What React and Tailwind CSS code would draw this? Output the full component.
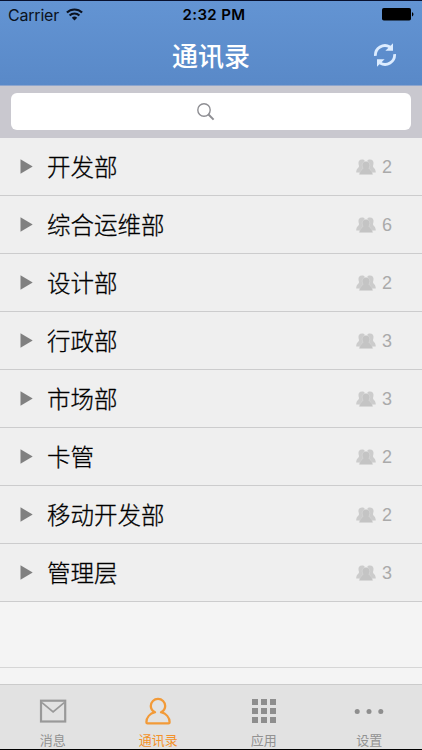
import React from 'react';

const departments = [
  ['开发部', 2],
  ['综合运维部', 6],
  ['设计部', 2],
  ['行政部', 3],
  ['市场部', 3],
  ['卡管', 2],
  ['移动开发部', 2],
  ['管理层', 3],
];

function WifiIcon() {
  return (
    <svg width="17" height="13" viewBox="0 0 17 13" fill="none" stroke="#0b1220" strokeWidth="2.1">
      <path d="M0.9 4.6 A10.8 10.8 0 0 1 16.1 4.6" />
      <path d="M3.6 7.5 A7 7 0 0 1 13.4 7.5" />
      <path d="M8.5 12.4 L5.8 9.7 A3.9 3.9 0 0 1 11.2 9.7 Z" fill="#0b1220" stroke="none" />
    </svg>
  );
}

function BatteryIcon() {
  return (
    <svg width="32" height="13" viewBox="0 0 32 13">
      <rect x="0" y="0" width="29" height="12.6" rx="1.8" fill="#000" />
      <path d="M30 4.3 C31.9 4.7 31.9 8 30 8.4 Z" fill="#000" />
    </svg>
  );
}

function RefreshIcon() {
  return (
    <svg width="24" height="24" viewBox="0 0 24 24" fill="none" stroke="#dcecff" strokeWidth="2.8">
      <path d="M2.4 12.8 A9.6 9.6 0 0 1 16.9 4" />
      <path d="M21.6 11.2 A9.6 9.6 0 0 1 7.1 20" />
      <path d="M20 0.2 V7.8 H12.4 Z" fill="#dcecff" stroke="none" />
      <path d="M4 23.8 V16.2 H11.6 Z" fill="#dcecff" stroke="none" />
    </svg>
  );
}

function SearchIcon() {
  return (
    <svg width="18" height="18" viewBox="0 0 18 18" fill="none" stroke="#8e8e93">
      <circle cx="7" cy="7" r="6.2" strokeWidth="1.4" />
      <path d="M11.5 11.5 L16.6 16.6" strokeWidth="2" />
    </svg>
  );
}

function GroupIcon() {
  return (
    <svg width="20" height="16" viewBox="0 0 20 16">
      <g fill="#cccccc">
        <path d="M6.2 0.5 C3.2 0.5 2.2 2.4 2.5 4.7 C2.7 6.1 3.3 7 2.8 8 C2.2 9.2 0.3 9.5 0.2 13.6 H6 L8.6 1.6 C8.1 0.8 7.4 0.5 6.2 0.5 Z" />
        <path d="M13.8 0.5 C16.8 0.5 17.8 2.4 17.5 4.7 C17.3 6.1 16.7 7 17.2 8 C17.8 9.2 19.7 9.5 19.8 13.6 H14 L11.4 1.6 C11.9 0.8 12.6 0.5 13.8 0.5 Z" />
      </g>
      <path
        d="M10 2.4 C7.3 2.4 6 4.1 6.2 6.4 C6.3 7.6 6.9 8.5 6.9 9.5 C6 11.1 3.6 11.4 3.4 15.6 H16.6 C16.4 11.4 14 11.1 13.1 9.5 C13.1 8.5 13.7 7.6 13.8 6.4 C14 4.1 12.7 2.4 10 2.4 Z"
        fill="#c4c4c4"
        stroke="#d8d8d8"
        strokeWidth="0.6"
      />
    </svg>
  );
}

function MailIcon() {
  return (
    <svg width="28" height="28" viewBox="0 0 28 28" fill="none" stroke="#999999">
      <rect x="2" y="3.7" width="24.2" height="20.8" strokeWidth="2.2" />
      <path d="M3 5.6 L14.1 15 L25.2 5.6" strokeWidth="1.7" />
    </svg>
  );
}

function PersonIcon() {
  return (
    <svg width="28" height="28" viewBox="0 0 28 28" fill="none" stroke="#f29a38" strokeWidth="2.3" strokeLinejoin="round">
      <path d="M11 15.2 C8.3 13.9 6.8 11.6 6.8 9 C6.8 5 10 1.9 14 1.9 C18 1.9 21.2 5 21.2 9 C21.2 11.6 19.7 13.9 17 15.2 C22 16.6 25.6 20.6 25.6 25.2 Q25.6 26.3 24.5 26.3 H3.5 Q2.4 26.3 2.4 25.2 C2.4 20.6 6 16.6 11 15.2 Z" />
    </svg>
  );
}

function GridIcon() {
  return (
    <svg width="28" height="28" viewBox="0 0 28 28" fill="#8e8e8e">
      {[2, 11, 20].map((y) => [2, 11, 20].map((x) => <rect key={`${x}-${y}`} x={x} y={y} width="6" height="6" />))}
    </svg>
  );
}

function MoreIcon() {
  return (
    <svg width="30" height="28" viewBox="0 0 30 28" fill="#8e8e8e">
      <circle cx="3.2" cy="14.5" r="2.5" />
      <circle cx="15" cy="14.5" r="2.5" />
      <circle cx="26.8" cy="14.5" r="2.5" />
    </svg>
  );
}

const tabs = [
  ['消息', MailIcon, false],
  ['通讯录', PersonIcon, true],
  ['应用', GridIcon, false],
  ['设置', MoreIcon, false],
];

export default function App() {
  return (
    <div className="flex h-[750px] w-[422px] flex-col overflow-hidden border-b border-black bg-[#f4f4f4] font-['Noto_Sans_CJK_SC',sans-serif]">
      <header className="flex h-[86px] shrink-0 flex-col border-t border-b border-t-[#08112f] border-b-[#8da5cd] bg-linear-to-b from-[#6394d3] to-[#5989c8]">
        <div className="grid h-[27px] grid-cols-3 items-center pr-2 pl-2 font-[Inter,sans-serif] text-[15px] text-[#0b1220]">
          <div className="flex items-center gap-[7px]">
            <span className="text-[16px] tracking-[-0.2px]">Carrier</span>
            <WifiIcon />
          </div>
          <span className="pt-px pl-[6px] text-center font-semibold tracking-[0.35px] whitespace-nowrap text-black">2:32 PM</span>
          <div className="flex justify-end">
            <BatteryIcon />
          </div>
        </div>
        <div className="grid h-[54px] grid-cols-[1fr_auto_1fr] items-center pr-[25px] pl-[25px]">
          <span />
          <h1 className="text-[26px] leading-none font-medium text-white">通讯录</h1>
          <div className="flex justify-end">
            <RefreshIcon />
          </div>
        </div>
      </header>

      <div className="h-[52px] shrink-0 bg-[#c9c8cf] px-[11px] pt-[7px]">
        <div className="flex h-[37px] items-center justify-center rounded-[6px] bg-white pr-[11px]">
          <SearchIcon />
        </div>
      </div>

      <ul className="shrink-0 bg-[#efefef]">
        {departments.map(([name, count]) => (
          <li key={name} className="flex h-[58px] items-center border-b border-[#cccccd] pr-[30px] pl-5">
            <svg width="13" height="15" viewBox="0 0 13 15" fill="#808080">
              <path d="M0.5 0.3 L12.7 7.5 L0.5 14.7 Z" />
            </svg>
            <span className="ml-[14px] grow pt-px text-[23.5px] leading-none font-light text-black [-webkit-text-stroke:0.3px_black]">{name}</span>
            <GroupIcon />
            <span className="ml-[6px] pt-px font-['Liberation_Sans',sans-serif] text-[18px] leading-none text-[#aaaaaa]">{count}</span>
          </li>
        ))}
      </ul>
      <div className="h-[66px] shrink-0 border-b border-[#d6d6d6]" />
      <div className="h-4 shrink-0" />

      <nav className="grid h-[65px] shrink-0 grid-cols-4 border-t border-[#cbcbcb] bg-[#e2e2e2]">
        {tabs.map(([label, Icon, active]) => (
          <div key={label} className={active ? 'flex flex-col items-center pt-3 text-[#f3922b]' : 'flex flex-col items-center pt-3 text-[#929292]'}>
            <Icon />
            <span className="mt-[7px] text-[13px] leading-4">{label}</span>
          </div>
        ))}
      </nav>
    </div>
  );
}
